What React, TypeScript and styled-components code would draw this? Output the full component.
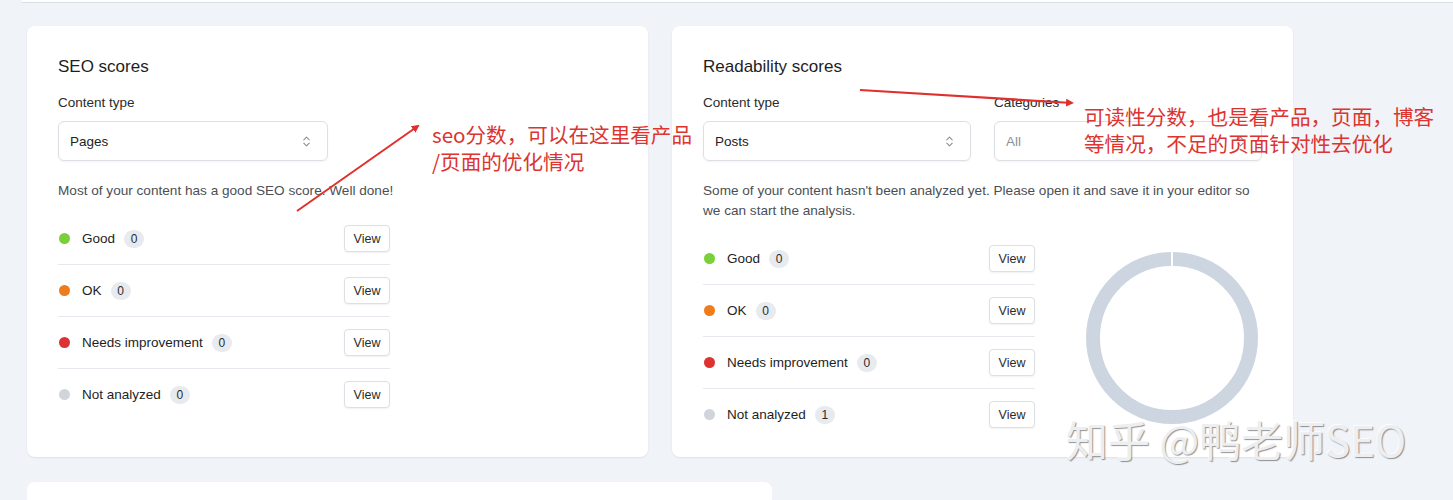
import styled, { createGlobalStyle } from 'styled-components';
import { ChevronsUpDown } from 'lucide-react';

interface Row {
	label: string;
	count: number;
	color: string;
}

const seoRows: Row[] = [
	{ label: 'Good', count: 0, color: '#7ad03a' },
	{ label: 'OK', count: 0, color: '#ee7c1b' },
	{ label: 'Needs improvement', count: 0, color: '#dc3232' },
	{ label: 'Not analyzed', count: 0, color: '#d1d5db' },
];

const readabilityRows: Row[] = [
	{ label: 'Good', count: 0, color: '#7ad03a' },
	{ label: 'OK', count: 0, color: '#ee7c1b' },
	{ label: 'Needs improvement', count: 0, color: '#dc3232' },
	{ label: 'Not analyzed', count: 1, color: '#d1d5db' },
];

const GlobalStyle = createGlobalStyle`
	body {
		margin: 0;
		background: #f0f3f7;
		font-family: 'Liberation Sans', Arial, sans-serif;
		color: #1e1e1e;
		overflow: hidden;
	}
`;

// list of score rows, shared by both cards
const ScoreList = ({ rows }: { rows: Row[] }) => (
	<List>
		{rows.map((row) => (
			<ListRow key={row.label}>
				<Dot color={row.color} />
				<RowLabel>{row.label}</RowLabel>
				<Badge>{row.count}</Badge>
				<ViewButton>View</ViewButton>
			</ListRow>
		))}
	</List>
);

const Select = ({ value, muted }: { value: string; muted?: boolean }) => (
	<SelectBox muted={muted}>
		<span>{value}</span>
		<ChevronsUpDown size={13} strokeWidth={2} color='#8a8f96' />
	</SelectBox>
);

const App = () => {
	return (
		<Page>
			<GlobalStyle />
			<TopCard />
			<Grid>
				<Card>
					<Title>SEO scores</Title>
					<Fields>
						<Field>
							<Label>Content type</Label>
							<Select value='Pages' />
						</Field>
					</Fields>
					<Description>Most of your content has a good SEO score. Well done!</Description>
					<ScoreList rows={seoRows} />
				</Card>
				<Card>
					<Title>Readability scores</Title>
					<Fields>
						<Field>
							<Label>Content type</Label>
							<Select value='Posts' />
						</Field>
						<Field>
							<Label>Categories</Label>
							<Select value='All' muted />
						</Field>
					</Fields>
					<Description>
						Some of your content hasn't been analyzed yet. Please open it and save it in your editor so
						we can start the analysis.
					</Description>
					<Split>
						<ScoreList rows={readabilityRows} />
						<Donut width='172' height='172' viewBox='0 0 172 172'>
							<circle cx='86' cy='86' r='79' fill='none' stroke='#cdd6e0' strokeWidth='14' />
							<rect x='85' y='0' width='2' height='16' fill='#fff' />
						</Donut>
					</Split>
				</Card>
			</Grid>
			<BottomCard />

			{/* annotations drawn over the screenshot */}
			<Arrows width='1453' height='500'>
				<defs>
					<marker id='head' markerWidth='8' markerHeight='8' refX='6' refY='4' orient='auto' markerUnits='userSpaceOnUse'>
						<path d='M0 0 L8 4 L0 8 Z' fill='#e0302c' />
					</marker>
				</defs>
				<line x1='297' y1='211' x2='418' y2='126' stroke='#e0302c' strokeWidth='2' markerEnd='url(#head)' />
				<line x1='860' y1='90' x2='1072' y2='103' stroke='#e0302c' strokeWidth='2.2' markerEnd='url(#head)' />
			</Arrows>
			<Note left={432} top={121}>
				seo分数，可以在这里看产品
				<br />
				/页面的优化情况
			</Note>
			<Note left={1084} top={103}>
				可读性分数，也是看产品，页面，博客
				<br />
				等情况，不足的页面针对性去优化
			</Note>
			<Watermark>知乎 @鸭老师SEO</Watermark>
		</Page>
	);
};

export default App;

const Page = styled.div`
	position: relative;
	height: 500px;
`;

const TopCard = styled.div`
	height: 2px;
	margin-left: 22px;
	background: #fff;
	border-bottom: 1px solid #d9dee4;
`;

const Grid = styled.div`
	display: grid;
	grid-template-columns: 621px 621px;
	gap: 24px;
	margin: 23px 0 0 27px;
`;

const Card = styled.section`
	background: #fff;
	border-radius: 8px;
	box-shadow: 0 1px 2px rgba(15, 23, 42, 0.08);
	padding: 29px 31px 0;
	height: 431px;
	box-sizing: border-box;
`;

const BottomCard = styled.div`
	width: 745px;
	height: 40px;
	margin: 25px 0 0 27px;
	background: #fff;
	border-radius: 8px 8px 0 0;
`;

const Title = styled.h2`
	margin: 0;
	font-size: 17px;
	line-height: 24px;
	font-weight: 400;
	color: #1e1e1e;
`;

const Fields = styled.div`
	display: flex;
	gap: 23px;
	margin-top: 15px;
`;

const Field = styled.div`
	display: flex;
	flex-direction: column;
	gap: 9px;
	width: 270px;
`;

const Label = styled.label`
	font-size: 13.5px;
	line-height: 18px;
	color: #2b2b2b;
`;

const SelectBox = styled.div<{ muted?: boolean }>`
	display: flex;
	align-items: center;
	justify-content: space-between;
	height: 40px;
	box-sizing: border-box;
	padding: 0 14px 0 11px;
	border: 1px solid #dcdfe4;
	border-radius: 6px;
	box-shadow: 0 1px 2px rgba(0, 0, 0, 0.05);
	font-size: 13.5px;
	color: ${(p) => (p.muted ? '#8d9197' : '#222')};
`;

const Description = styled.p`
	margin: 20px 0 0;
	font-size: 13.6px;
	line-height: 20px;
	color: #4b4f55;
	max-width: 556px;
`;

const Split = styled.div`
	display: flex;
	align-items: center;
`;

const Donut = styled.svg`
	margin: 14px 0 0 51px;
	flex-shrink: 0;
`;

const List = styled.ul`
	list-style: none;
	margin: 12px 0 0;
	padding: 0;
	width: 332px;
`;

const ListRow = styled.li`
	display: flex;
	align-items: center;
	padding: 12px 0;
	border-bottom: 1px solid #e5e8ec;

	&:last-child {
		border-bottom: none;
	}
`;

const Dot = styled.span<{ color: string }>`
	width: 11px;
	height: 11px;
	border-radius: 50%;
	background: ${(p) => p.color};
	margin: 0 12px 0 1px;
`;

const RowLabel = styled.span`
	font-size: 13.5px;
	color: #1e1e1e;
`;

const Badge = styled.span`
	margin-left: 9px;
	min-width: 8px;
	padding: 0 6px;
	height: 18px;
	line-height: 18px;
	border-radius: 9px;
	background: #e7eaee;
	font-size: 12px;
	color: #2b2b2b;
	text-align: center;
`;

const ViewButton = styled.button`
	margin-left: auto;
	width: 46px;
	height: 27px;
	border: 1px solid #dcdfe4;
	border-radius: 4px;
	background: #fff;
	box-shadow: 0 1px 2px rgba(0, 0, 0, 0.06);
	font-family: inherit;
	font-size: 12.5px;
	color: #2b2b2b;
	padding: 0;
`;

const Arrows = styled.svg`
	position: absolute;
	top: 0;
	left: 0;
	pointer-events: none;
`;

const Note = styled.div<{ left: number; top: number }>`
	position: absolute;
	left: ${(p) => p.left}px;
	top: ${(p) => p.top}px;
	font-family: 'Noto Sans CJK SC', 'Liberation Sans', sans-serif;
	font-size: 20.6px;
	line-height: 27px;
	color: #dc3431;
	white-space: nowrap;
`;

const Watermark = styled.div`
	position: absolute;
	left: 1066px;
	top: 412px;
	font-family: 'Noto Sans CJK SC', 'Liberation Sans', sans-serif;
	font-size: 42px;
	line-height: 54px;
	color: #eceef1;
	text-shadow: 1px 1px 1px rgba(60, 60, 60, 0.55), -1px -1px 0 rgba(255, 255, 255, 0.8);
	white-space: nowrap;
`;
